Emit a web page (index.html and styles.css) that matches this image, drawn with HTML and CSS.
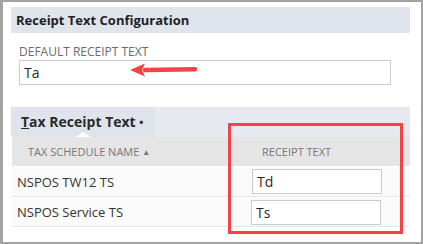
FILE: index.html
```html
<!DOCTYPE html>
<html>
	<head>
		<meta charset="utf-8">
		<link rel="stylesheet" href="styles.css">
	</head>
	<body>
		<div id="frame">
			<div class="sectionHead">Receipt Text Configuration</div>
			<div class="field">
				<div class="fieldLabel">DEFAULT RECEIPT TEXT</div>
				<div class="textBox wide">Ta</div>
				<svg class="arrow" width="70" height="16" viewBox="0 0 70 16">
					<path d="M16 8 L66 7.2" stroke="#f44348" stroke-width="4.5" stroke-linecap="round" fill="none"/>
					<path d="M1 8 L16 1.5 L13 8 L16 14.5 Z" fill="#f44348"/>
				</svg>
			</div>
			<div class="tabBar">
				<div class="tab"><span class="key">T</span>ax Receipt Text <span class="dot">&bull;</span></div>
				<div class="tabPointer"></div>
			</div>
			<div class="grid">
				<div class="gridHead">
					<div class="cellName">TAX SCHEDULE NAME <span class="sort">&#9650;</span></div>
					<div class="cellText">RECEIPT TEXT</div>
				</div>
				<div class="gridRow">
					<div class="cellName">NSPOS TW12 TS</div>
					<div class="cellText"><div class="textBox small">Td</div></div>
				</div>
				<div class="gridRow">
					<div class="cellName">NSPOS Service TS</div>
					<div class="cellText"><div class="textBox small shift">Ts</div></div>
				</div>
			</div>
			<div class="highlight"></div>
		</div>
	</body>
</html>
```
FILE: styles.css
```css
body{
	margin:0;
	font-family:"Open Sans", "Liberation Sans", sans-serif;
	color:#333;
}

#frame{
	position:relative;
	width:423px;
	height:244px;
	box-sizing:border-box;
	border:2px solid #a3a3a3;
	border-left-width:3px;
	padding:5px 11px 0 8px;
	background:#fff;
}

.sectionHead{
	height:26px;
	line-height:26px;
	background:#e0e5ed;
	padding-left:5px;
	font-weight:bold;
	font-size:13px;
	color:#222;
}

.field{
	position:relative;
	padding:12px 19px 0 8px;
}

.fieldLabel{
	font-size:12px;
	color:#6b6b6b;
	line-height:14px;
	margin-bottom:1px;
}

.textBox{
	box-sizing:border-box;
	border:1px solid #cbcbcb;
	background:#fff;
	font-size:14px;
	padding-left:4px;
	color:#2a2a2a;
}

.wide{
	height:25px;
	line-height:23px;
}

.arrow{
	position:absolute;
	left:118px;
	top:29px;
}

.tabBar{
	position:relative;
	margin-top:22px;
	height:30px;
	background:#e6eaf0;
	display:flex;
}

.tab{
	width:134px;
	background:#dfe4ec;
	padding-left:10px;
	font-weight:bold;
	font-size:14px;
	line-height:30px;
	color:#2b2b2b;
}

.key{
	text-decoration:underline;
}

.dot{
	font-size:11px;
	vertical-align:1px;
}

.tabPointer{
	position:absolute;
	left:64px;
	bottom:0;
	width:0;
	height:0;
	border-left:8px solid transparent;
	border-right:8px solid transparent;
	border-bottom:5px solid #fff;
}

.grid{
	margin-left:1px;
	background:#fafafa;
}

.gridHead{
	display:flex;
	height:29px;
	background:#e5e5e5;
	font-size:11px;
	color:#777;
	align-items:center;
}

.gridHead .cellName{
	padding-left:16px;
}

.gridHead .cellText{
	padding-left:14px;
}

.sort{
	font-size:8px;
	vertical-align:1px;
}

.cellName{
	width:236px;
	box-sizing:border-box;
	padding-left:5px;
}

.gridRow{
	display:flex;
	align-items:center;
	font-size:13px;
	border-top:1px solid #fff;
	border-bottom:1px solid #e6e6e6;
}

.gridRow:nth-child(2){
	height:29px;
}

.gridRow:nth-child(3){
	height:28px;
}

.cellText{
	flex:1;
}

.small{
	width:130px;
	height:25px;
	line-height:23px;
	margin-left:4px;
	font-size:14px;
}

.shift{
	margin-left:3px;
}

.highlight{
	position:absolute;
	left:225px;
	top:121px;
	width:175px;
	height:111px;
	box-sizing:border-box;
	border:3px solid #f44348;
}
```
